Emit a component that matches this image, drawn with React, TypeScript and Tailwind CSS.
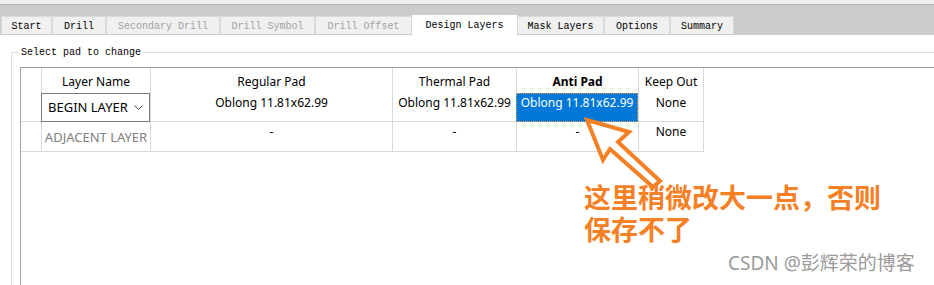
import React from "react";

const tabs = [
  { label: "Start", w: "w-[51px]", disabled: false },
  { label: "Drill", w: "w-[54px]", disabled: false },
  { label: "Secondary Drill", w: "w-[114px]", disabled: true },
  { label: "Drill Symbol", w: "w-[95px]", disabled: true },
  { label: "Drill Offset", w: "w-[97px]", disabled: true },
  { label: "Design Layers", w: "w-[105px]", active: true },
  { label: "Mask Layers", w: "w-[87px]", disabled: false },
  { label: "Options", w: "w-[66px]", disabled: false },
  { label: "Summary", w: "w-[64px]", disabled: false },
];

const mono = "font-['Liberation_Mono',monospace] text-[10px]";
const ui = "font-['Noto_Sans',sans-serif] text-[12px]";

function Cell({ w, className = "", children }: { w: string; className?: string; children?: React.ReactNode }) {
  return <div className={`${w} shrink-0 border-r border-[#d8d8d8] ${className}`}>{children}</div>;
}

export default function App() {
  return (
    <div className="w-[934px] h-[285px] overflow-hidden bg-white relative flex flex-col">
      {/* window chrome */}
      <div className="h-[5px] bg-[#f0f0f0] border-b border-[#b4b4b4] shrink-0" />
      <div className="h-[30px] bg-[#cccccc] flex items-end pl-[1px] shrink-0">
        {tabs.map((t) =>
          t.active ? (
            <div
              key={t.label}
              className={`${t.w} h-[20px] bg-white flex items-center justify-center pt-[1px] ${mono} text-black`}
            >
              {t.label}
            </div>
          ) : (
            <div
              key={t.label}
              className={`${t.w} h-[18px] mb-px bg-[#f0f0f0] border border-b-0 border-[#d9d9d9] flex items-center justify-center pt-[1px] ${mono} ${
                t.disabled ? "text-[#a0a0a0]" : "text-black"
              }`}
            >
              {t.label}
            </div>
          )
        )}
      </div>

      {/* group box */}
      <div className="flex-1 pt-[17px] pl-[11px] flex flex-col">
        <div className="relative flex-1 border-t border-l border-[#dcdcdc] pl-[8px] pt-[14px] flex flex-col">
          <span className={`absolute -top-[7px] left-[7px] bg-white px-[2px] ${mono} text-black leading-[14px]`}>
            Select pad to change
          </span>

          {/* grid */}
          <div className={`flex-1 border-t border-l border-[#a0a0a0] ${ui} text-black`}>
            <div className="flex h-[25px]">
              <Cell w="w-[21px]" />
              <Cell w="w-[109px]" className="flex items-center justify-center pt-[2px]">Layer Name</Cell>
              <Cell w="w-[242px]" className="flex items-center justify-center pt-[2px]">Regular Pad</Cell>
              <Cell w="w-[124px]" className="flex items-center justify-center pt-[2px]">Thermal Pad</Cell>
              <Cell w="w-[122px]" className="flex items-center justify-center pt-[2px] font-bold">Anti Pad</Cell>
              <Cell w="w-[65px]" className="flex items-center justify-center pt-[2px]">Keep Out</Cell>
            </div>
            <div className="flex h-[29px]">
              <Cell w="w-[21px]" className="border-b" />
              <Cell w="w-[109px]" className="border-b">
                <div className="h-[29px] -ml-px border border-[#7a7a7a] bg-white flex items-center justify-between pl-[6px] pr-[6px] text-[13px]">
                  <span>BEGIN LAYER</span>
                  <svg width="9" height="6" viewBox="0 0 9 6" fill="none" stroke="#555" strokeWidth="1">
                    <path d="M0.5 0.5 L4.5 4.5 L8.5 0.5" />
                  </svg>
                </div>
              </Cell>
              <Cell w="w-[242px]" className="border-b text-center leading-[16px] pt-[2px]">Oblong 11.81x62.99</Cell>
              <Cell w="w-[124px]" className="border-b text-center leading-[16px] pt-[2px] whitespace-nowrap">Oblong 11.81x62.99</Cell>
              <Cell w="w-[122px]" className="border-b">
                <div className="h-[29px] -ml-px bg-[#0078d7] border border-dotted border-[#e8a060] text-white text-center leading-[16px] pt-px whitespace-nowrap">
                  Oblong 11.81x62.99
                </div>
              </Cell>
              <Cell w="w-[65px]" className="border-b text-center leading-[16px] pt-[2px]">None</Cell>
            </div>
            <div className="flex h-[30px]">
              <Cell w="w-[21px]" className="border-b" />
              <Cell w="w-[109px]" className="border-b flex items-center justify-center pt-[2px] text-[#808080] text-[13px] whitespace-nowrap">
                ADJACENT LAYER
              </Cell>
              <Cell w="w-[242px]" className="border-b text-center leading-[16px] pt-[2px]">-</Cell>
              <Cell w="w-[124px]" className="border-b text-center leading-[16px] pt-[2px]">-</Cell>
              <Cell w="w-[122px]" className="border-b text-center leading-[16px] pt-[2px]">-</Cell>
              <Cell w="w-[65px]" className="border-b text-center leading-[16px] pt-[2px]">None</Cell>
            </div>
          </div>
        </div>
      </div>

      {/* annotation arrow */}
      <svg className="absolute left-0 top-0" width="934" height="285" viewBox="0 0 934 285" fill="none">
        <path
          d="M587 120 L629 132 L618 142 L660 181 L653 187 L610 149 L603 160 Z"
          stroke="#f58025"
          strokeWidth="4"
          strokeLinejoin="miter"
          fill="white"
        />
      </svg>

      <div className="absolute left-[584px] top-[181px] font-['Noto_Sans_CJK_SC',sans-serif] font-bold text-[27px] leading-[32px] text-[#f58025]">
        <div>这里稍微改大一点，否则</div>
        <div>保存不了</div>
      </div>

      <div className="absolute left-[728px] top-[252px] font-['Noto_Sans','Noto_Sans_CJK_SC',sans-serif] text-[19px] leading-[22px] text-[#9a9a9a]">
        CSDN @彭辉荣的博客
      </div>
    </div>
  );
}
